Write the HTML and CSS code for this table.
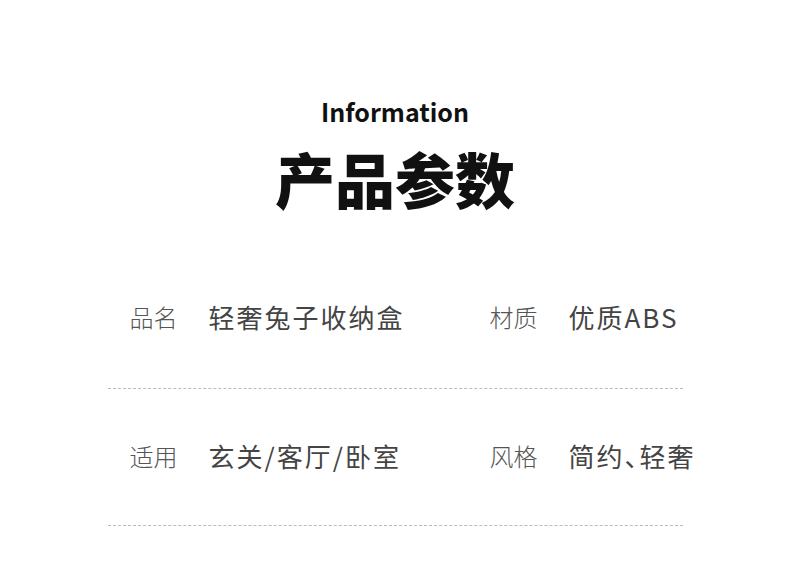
FILE: index.html
```html
<!DOCTYPE html>
<html lang="zh-CN">
<head>
  <meta charset="UTF-8">
  <title>产品参数</title>
  <link rel="stylesheet" href="styles.css">
</head>
<body>
  <div class="head">
    <div class="en">Information</div>
    <h1>产品参数</h1>
  </div>

  <div class="params">
    <div class="row">
      <div class="cell">
        <span class="label">品名</span>
        <span class="value">轻奢兔子收纳盒</span>
      </div>
      <div class="cell">
        <span class="label">材质</span>
        <span class="value">优质ABS</span>
      </div>
    </div>
    <div class="row">
      <div class="cell">
        <span class="label">适用</span>
        <span class="value">玄关/客厅/卧室</span>
      </div>
      <div class="cell">
        <span class="label">风格</span>
        <span class="value">简约、轻奢</span>
      </div>
    </div>
  </div>
</body>
</html>
```

FILE: styles.css
```css
body { margin: 0; background: #fff; font-family: "Noto Sans CJK SC", "Noto Sans", sans-serif; }
.head { text-align: center; padding-top: 93px; }
.en { font-size: 25px; font-weight: 700; color: #111; line-height: 36px; }
h1 { margin: 13px 0 0; font-size: 60px; font-weight: 900; color: #111; line-height: 72px; }
.params { width: 575px; margin: 34px auto 0; }
.row { display: flex; padding: 44px 0 48px; border-bottom: 1px dashed #bbb; }
.row + .row { padding: 42px 0 46px; }
.cell { display: flex; align-items: center; height: 48px; flex: none; white-space: nowrap; }
.row .cell:first-child { width: 382px; padding-left: 22px; box-sizing: border-box; }
.label { width: 79px; font-size: 24px; font-weight: 300; color: #555; }
.value { font-size: 26px; font-weight: 400; color: #444; letter-spacing: 2px; font-feature-settings: "halt"; }
```
